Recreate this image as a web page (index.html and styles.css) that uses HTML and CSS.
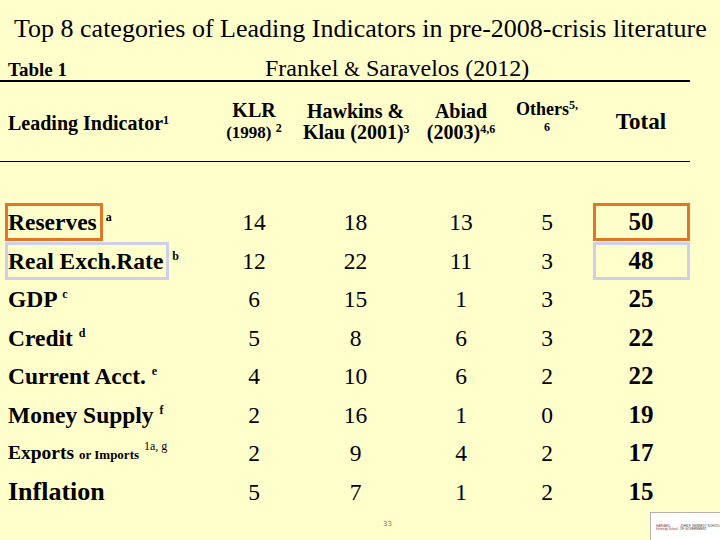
FILE: index.html
```html
<!DOCTYPE html>
<html>
<head>
<title>Top 8 categories of Leading Indicators</title>
<link rel="stylesheet" href="styles.css">
</head>
<body>
<div class="slide">
  <p class="title">Top 8 categories of Leading Indicators in pre-2008-crisis literature</p>
  <div class="subhead">
    <span class="tablelabel">Table 1</span>
    <span class="source">Frankel <span class="amp">&amp;</span> Saravelos (2012)</span>
  </div>
  <div class="thead">
    <div class="hcell hlabel">Leading Indicator<sup class="hs">1</sup></div>
    <div class="hcell"><span class="h20">KLR</span><br><span class="h17">(1998) <sup class="hs">2</sup></span></div>
    <div class="hcell h20">Hawkins &amp;<br>Klau (2001)<sup class="hs">3</sup></div>
    <div class="hcell h20">Abiad<br>(2003)<sup class="hs">4,6</sup></div>
    <div class="hcell hothers"><span class="h18">Others<sup class="hs">5,</sup></span><br><span class="hs6">6</span></div>
    <div class="hcell htotal">Total</div>
  </div>
  <div class="tbody">
    <div class="row">
      <div class="lbl"><span class="hl hl-orange">Reserves</span><sup class="fn fn-tight">a</sup></div>
      <div class="num">14</div><div class="num">18</div><div class="num">13</div><div class="num">5</div>
      <div class="tot"><span class="tbox tbox-orange">50</span></div>
    </div>
    <div class="row">
      <div class="lbl"><span class="hl hl-lav">Real Exch.Rate</span><sup class="fn fn-tight">b</sup></div>
      <div class="num">12</div><div class="num">22</div><div class="num">11</div><div class="num">3</div>
      <div class="tot"><span class="tbox tbox-lav">48</span></div>
    </div>
    <div class="row">
      <div class="lbl">GDP <sup class="fn">c</sup></div>
      <div class="num">6</div><div class="num">15</div><div class="num">1</div><div class="num">3</div>
      <div class="tot">25</div>
    </div>
    <div class="row">
      <div class="lbl">Credit <sup class="fn">d</sup></div>
      <div class="num">5</div><div class="num">8</div><div class="num">6</div><div class="num">3</div>
      <div class="tot">22</div>
    </div>
    <div class="row">
      <div class="lbl">Current Acct. <sup class="fn">e</sup></div>
      <div class="num">4</div><div class="num">10</div><div class="num">6</div><div class="num">2</div>
      <div class="tot">22</div>
    </div>
    <div class="row">
      <div class="lbl">Money Supply <sup class="fn">f</sup></div>
      <div class="num">2</div><div class="num">16</div><div class="num">1</div><div class="num">0</div>
      <div class="tot">19</div>
    </div>
    <div class="row">
      <div class="lbl lbl-exp">Exports <span class="orimp">or Imports</span> <sup class="fn fn-reg">1a, g</sup></div>
      <div class="num">2</div><div class="num">9</div><div class="num">4</div><div class="num">2</div>
      <div class="tot">17</div>
    </div>
    <div class="row">
      <div class="lbl lbl-inf">Inflation</div>
      <div class="num">5</div><div class="num">7</div><div class="num">1</div><div class="num">2</div>
      <div class="tot">15</div>
    </div>
  </div>
  <div class="footer">
    <span class="pagenum">33</span>
    <div class="logo">
      <span class="logo-left"><span>HARVARD</span><span>Kennedy School</span></span>
      <svg class="shield" width="9" height="17" viewBox="0 0 9 17">
        <circle cx="4.5" cy="5" r="4.2" fill="#e4e4e4"/>
        <path d="M1 8h7v4c0 2.5-2 4-3.5 4.5C3 16 1 14.5 1 12z" fill="#c0283c"/>
        <path d="M1 10h7M1 12h7M1.4 14h6.2" stroke="#fff" stroke-width="0.8"/>
      </svg>
      <span class="logo-right"><span>JOHN F. KENNEDY SCHOOL</span><span>OF GOVERNMENT</span></span>
    </div>
  </div>
</div>
</body>
</html>
```

FILE: styles.css
```css
html, body {
  margin: 0;
  padding: 0;
  background: #FFFFCC;
}

body {
  font-family: "Liberation Serif", serif;
  color: #000;
}

.slide {
  width: 720px;
  height: 540px;
  overflow: hidden;
  background: #FFFFCC;
}

.title {
  margin: 0;
  padding: 13px 0 0 14px;
  height: 32px;
  line-height: 32px;
  font-size: 26px;
  font-weight: normal;
  white-space: nowrap;
}

.subhead {
  width: 690px;
  height: 24px;
  padding-top: 11px;
  display: flex;
  align-items: baseline;
  border-bottom: 2px solid #000;
  line-height: 24px;
}

.tablelabel {
  width: 257px;
  padding-left: 8px;
  font-size: 19px;
  font-weight: bold;
}

.source {
  font-size: 24px;
  white-space: nowrap;
}

.amp {
  font-size: 20px;
}

.thead {
  width: 690px;
  height: 79px;
  display: grid;
  grid-template-columns: 205px 98px 105px 106px 66px 110px;
  align-items: center;
  border-bottom: 1px solid #000;
  font-weight: bold;
}

.hcell {
  text-align: center;
  line-height: 21px;
  white-space: nowrap;
}

.hlabel {
  text-align: left;
  padding-left: 8px;
  padding-top: 4px;
  font-size: 20px;
}

.h20 {
  font-size: 20px;
}

.h17 {
  font-size: 17px;
}

.h18 {
  font-size: 18px;
}

.hs {
  font-size: 12px;
  line-height: 0;
  vertical-align: 6px;
}

.hothers {
  padding-bottom: 8px;
  line-height: 16px;
}

.hs6 {
  font-size: 12px;
  line-height: 12px;
}

.htotal {
  font-size: 23px;
  padding-left: 12px;
}

.tbody {
  padding-top: 41px;
}

.row {
  display: grid;
  grid-template-columns: 205px 98px 105px 106px 66px 122px;
  height: 38.5px;
  line-height: 38.5px;
  font-size: 23.5px;
  white-space: nowrap;
}

.lbl {
  padding-left: 8px;
  font-weight: bold;
}

.lbl-exp {
  font-size: 19.5px;
}

.orimp {
  font-size: 13px;
}

.lbl-inf {
  font-size: 26px;
}

.fn {
  font-size: 12px;
  line-height: 0;
  vertical-align: 9px;
}

.fn-tight {
  margin-left: 3px;
}

.fn-reg {
  font-weight: normal;
}

.num {
  text-align: center;
}

.tot {
  text-align: center;
  font-weight: bold;
  font-size: 25px;
}

.hl {
  display: inline-block;
  box-sizing: border-box;
  height: 38px;
  line-height: 32px;
  margin-left: -3px;
  padding-right: 3px;
  border: 3px solid transparent;
}

.hl-orange {
  border-color: #E27626;
}

.hl-lav {
  border-color: #CFCFEA;
}

.tbox {
  display: inline-block;
  box-sizing: border-box;
  width: 97px;
  height: 38px;
  line-height: 32px;
  border: 3px solid transparent;
}

.tbox-orange {
  border-color: #E27626;
}

.tbox-lav {
  border-color: #CFCFEA;
}

.footer {
  height: 29px;
  display: flex;
  align-items: flex-start;
}

.pagenum {
  margin-left: 383px;
  margin-top: 9px;
  font-family: "DejaVu Sans", sans-serif;
  font-size: 7px;
  line-height: 8px;
  color: #7a7a66;
}

.logo {
  margin-left: auto;
  margin-top: 1px;
  width: 70px;
  height: 30px;
  box-sizing: border-box;
  background: #fff;
  border: 1px solid #b8b0a8;
  border-right: none;
  display: flex;
  align-items: center;
  gap: 2px;
  padding: 2px 0 0 5px;
}

.logo-left,
.logo-right {
  display: flex;
  flex-direction: column;
  font-family: "Liberation Sans", sans-serif;
  font-size: 3px;
  line-height: 3.5px;
  white-space: nowrap;
}

.logo-left {
  color: #9a3040;
  width: 20px;
}

.logo-right {
  color: #333;
}

.shield {
  display: block;
}
```
